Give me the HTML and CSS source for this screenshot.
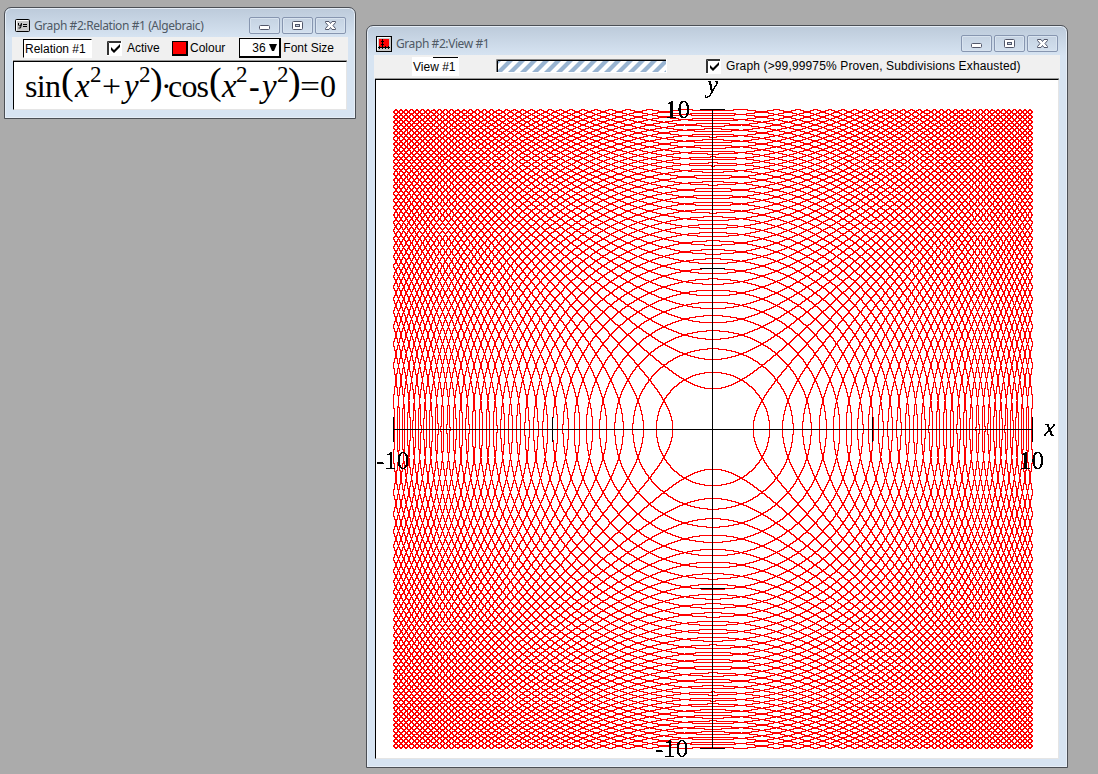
FILE: index.html
```html
<!DOCTYPE html>
<html lang="en">
<head>
<meta charset="utf-8">
<title>Graph #2</title>
<link rel="stylesheet" href="styles.css">
</head>
<body>
<svg width="0" height="0" class="defs">
  <filter id="crisp" color-interpolation-filters="sRGB"><feComponentTransfer><feFuncA type="discrete" tableValues="0 0 1 1 1"/></feComponentTransfer></filter>
  <symbol id="min" viewBox="0 0 29 15"><rect x="9.500" y="7.500" width="10" height="4" rx="1" fill="#fff" stroke="#52576a"/></symbol>
  <symbol id="max" viewBox="0 0 29 15"><rect x="9.500" y="3.500" width="10" height="8" rx="1" fill="#fff" stroke="#52576a"/><rect x="12.500" y="6.500" width="4" height="2" fill="#c4d1e0" stroke="#52576a"/></symbol>
  <symbol id="close" viewBox="0 0 29 15"><path d="M9.500 3.500h3.500l1.500 2 1.500-2h3.500v1l-2.500 3 2.500 3v1h-3.500l-1.500-2-1.500 2h-3.500v-1l2.500-3-2.500-3z" fill="#fff" stroke="#52576a"/></symbol>
</svg>
<main class="desktop">
  <section class="window relation">
    <header class="title">
      <svg class="icon" width="15" height="13"><rect x=".5" y=".5" width="14" height="12" rx="1" fill="#c8c8c8" stroke="#000"/><path d="M1.500 11.500V1.500H13" fill="none" stroke="#fff"/><path d="M3.500 4v2l1 1h1l1-3M6.500 5l-1 4h-2M8 5.500h4M8 7.500h4" fill="none" stroke="#000"/></svg>
      <h1>Graph #2:Relation #1 (Algebraic)</h1>
      <div class="buttons"><svg><use href="#min"/></svg><svg><use href="#max"/></svg><svg><use href="#close"/></svg></div>
    </header>
    <div class="toolbar">
      <span class="name">Relation #1</span>
      <svg class="check" width="15" height="15"><path d="M0 0h15v15H0z" fill="#fff"/><path d="M.5 14V.5H14M1.500 14V1.500H14" fill="none" stroke="#333"/><path d="M4 6v3l3 3 6-6V3L7 9z"/></svg>
      <span class="active">Active</span>
      <i class="swatch"></i><span>Colour</span>
      <span class="size">36<svg width="8" height="8"><path d="M0 0h8L5 7H3z"/></svg></span><span class="fs">Font Size</span>
    </div>
    <div class="formula"><svg width="330" height="46">
      <g font-size="32"><text x="11" y="35" textLength="36">sin</text><text x="88" y="35" textLength="19" lengthAdjust="spacingAndGlyphs">+</text><text x="147" y="35">·</text><text x="154" y="35" textLength="41">cos</text><text x="235" y="35" class="bold">-</text><text x="286" y="35" textLength="20" lengthAdjust="spacingAndGlyphs">=</text><text x="306" y="35" textLength="16">0</text></g>
      <g font-size="33" class="it"><text x="61" y="35">x</text><text x="110" y="35">y</text><text x="208" y="35">x</text><text x="248" y="35">y</text></g>
      <g font-size="23"><text x="76" y="20">2</text><text x="125" y="20">2</text><text x="222" y="20">2</text><text x="263" y="20">2</text></g>
      <g font-size="38"><text x="47" y="32">(</text><text x="136" y="32">)</text><text x="195" y="32">(</text><text x="274" y="32">)</text></g>
    </svg></div>
  </section>
  <section class="window view">
    <header class="title">
      <svg class="icon" width="16" height="16"><rect x=".5" y=".5" width="15" height="15" fill="#c8c8c8" stroke="#000"/><path d="M1.500 14V1.500H14" fill="none" stroke="#fff"/><path d="M3 3h10v8H3z" fill="red"/><path d="M6.500 3v10M2 11.500h12M5 5.500h3M5 8.500h3M3.500 10v3M9.500 10v3M12.500 10v3" stroke="#000"/></svg>
      <h1>Graph #2:View #1</h1>
      <div class="buttons"><svg><use href="#min"/></svg><svg><use href="#max"/></svg><svg><use href="#close"/></svg></div>
    </header>
    <div class="toolbar">
      <span class="name">View #1</span>
      <svg class="progress" width="171" height="14"><defs><pattern id="stripes" width="12" height="11" patternUnits="userSpaceOnUse" x="1" y="2"><path d="M0 0h12v11H0z" fill="#fff"/><path d="M-1 11L10 0h6L5 11zM-13 11L-2 0h6L-7 11zM11 11L22 0h6L17 11z" fill="#99b4d1"/></pattern></defs><path d="M0 0h171v14H0z" fill="#fff"/><path d="M2 2h168v11H2z" fill="url(#stripes)"/><path d="M.5 13V.5H170" fill="none" stroke="#888"/><path d="M1.500 13V1.500H170" fill="none" stroke="#000"/></svg>
      <svg class="check" width="15" height="15"><path d="M0 0h15v15H0z" fill="#fff"/><path d="M.5 14V.5H14M1.500 14V1.500H14" fill="none" stroke="#333"/><path d="M4 6v3l3 3 6-6V3L7 9z"/></svg>
      <span class="status">Graph (&gt;99,99975% Proven, Subdivisions Exhausted)</span>
    </div>
    <div class="graph">
      <canvas id="plot" width="640" height="640"></canvas>
      <svg class="axes" width="682" height="678">
        <path d="M17 349.500h640M336.500 30v639M17.500 337v25M176.500 337v25M496.500 337v25M656.500 337v25M324 29.500h25M324 188.500h25M324 508.500h25M324 668.500h25" stroke="#000"/>
        <g font-size="25" filter="url(#crisp)"><text x="289" y="38">10</text><text x="279" y="677">-10</text><text x="0" y="389">-10</text><text x="643" y="389">10</text><text x="331" y="13" class="it">y</text><text x="668" y="356" class="it">x</text></g>
      </svg>
    </div>
  </section>
</main>
<script src="plot.js"></script>
</body>
</html>
```
FILE: styles.css
```css
* { box-sizing: border-box; }
body { margin: 0; background: #ababab; font: 12px "Liberation Sans", Arial, sans-serif; color: #000; overflow: hidden; }
.defs { position: absolute; }
.desktop { position: relative; width: 1098px; height: 774px; }
.window { position: absolute; border: 1px solid #4b4f55; border-radius: 7px 7px 0 0; background: linear-gradient(#bccada, #d7e4f2 30px); box-shadow: inset 0 0 0 1px #e6eef7; padding: 0 7px 7px; display: flex; flex-direction: column; }
.relation { left: 4px; top: 7px; width: 352px; height: 112px; }
.view { left: 366px; top: 25px; width: 702px; height: 743px; }
.title { display: flex; align-items: center; height: 29px; flex: none; padding: 6px 2px 0 3px; }
.title h1 { margin: 0 0 0 4px; font: 12px "Noto Sans", sans-serif; color: #4f5965; flex: 1; white-space: nowrap; letter-spacing: -.42px; }
.view .title { padding-left: 2px; }
.buttons { display: flex; gap: 2px; }
.buttons svg { width: 31px; height: 17px; border: 1px solid #8796b0; border-radius: 2px; box-shadow: inset 0 0 0 1px #d8e3ef; }
.toolbar { height: 24px; flex: none; background: #f0f0f0; display: flex; align-items: center; white-space: nowrap; padding-bottom: 2px; }
.toolbar .name { background: #fff; border: 1px solid #fff; height: 19px; line-height: 18px; }
.relation .name { margin-left: 11px; width: 69px; padding-left: 1px; border-top-color: #000; border-left: 1px solid #000; }
.relation .check { margin-left: 15px; }
.active { margin-left: 5px; width: 45px; }
.swatch { width: 16px; height: 15px; background: red; border: 1px solid #000; border-width: 1px 2px 2px 1px; margin-right: 2px; }
.size { width: 42px; height: 20px; margin-left: auto; background: #fff; border: 1px solid #000; border-width: 1px 2px 2px 1px; padding-left: 12px; line-height: 18px; }
.size svg { margin-left: 3px; }
.fs { margin: 0 14px 0 2px; }
.formula, .graph { flex: 1; margin: 0 1px 1px; background: #fff; border: 1px solid #e5e5e5; border-top-color: #000; border-left-color: #000; box-shadow: 0 -1px #999; overflow: hidden; }
.formula svg, .axes { display: block; font-family: "Liberation Serif", "Times New Roman", serif; }
.it { font-style: italic; }
.bold { font-weight: bold; }
.view .name { margin-left: 38px; width: 47px; border-right-color: #ddd; border-image: linear-gradient(90deg, #fff 45%, #000 45%) 1 0 0 0; }
.progress { margin-left: 37px; }
.view .check { margin-left: 39px; }
.status { margin-left: 5px; letter-spacing: .14px; }
.graph { position: relative; }
#plot { display: block; margin: 29px 0 0 17px; }
.axes { position: absolute; left: 0; top: 0; }
```
FILE: plot.js
```js
// Marks every pixel whose square contains a solution of
// sin(x^2 + y^2) * cos(x^2 - y^2) = 0.
const ctx = document.getElementById('plot').getContext('2d');
const size = 640, half = 320, scale = 32;
ctx.fillStyle = '#f00';
for (let py = 0; py < size; py++) {
  const y = py < half ? half - py - 1 : py - half;
  const yl = (y / scale) ** 2, yh = ((y + 1) / scale) ** 2;
  for (let px = 0; px < size; px++) {
    const x = px < half ? half - px - 1 : px - half;
    const xl = (x / scale) ** 2, xh = ((x + 1) / scale) ** 2;
    const circle = xl + yl > 0 && Math.floor((xl + yl) / Math.PI) !== Math.floor((xh + yh) / Math.PI);
    const hyperbola = Math.floor((xl - yh) / Math.PI + 0.5) !== Math.floor((xh - yl) / Math.PI + 0.5);
    if (circle || hyperbola) ctx.fillRect(px, py, 1, 1);
  }
}
```
